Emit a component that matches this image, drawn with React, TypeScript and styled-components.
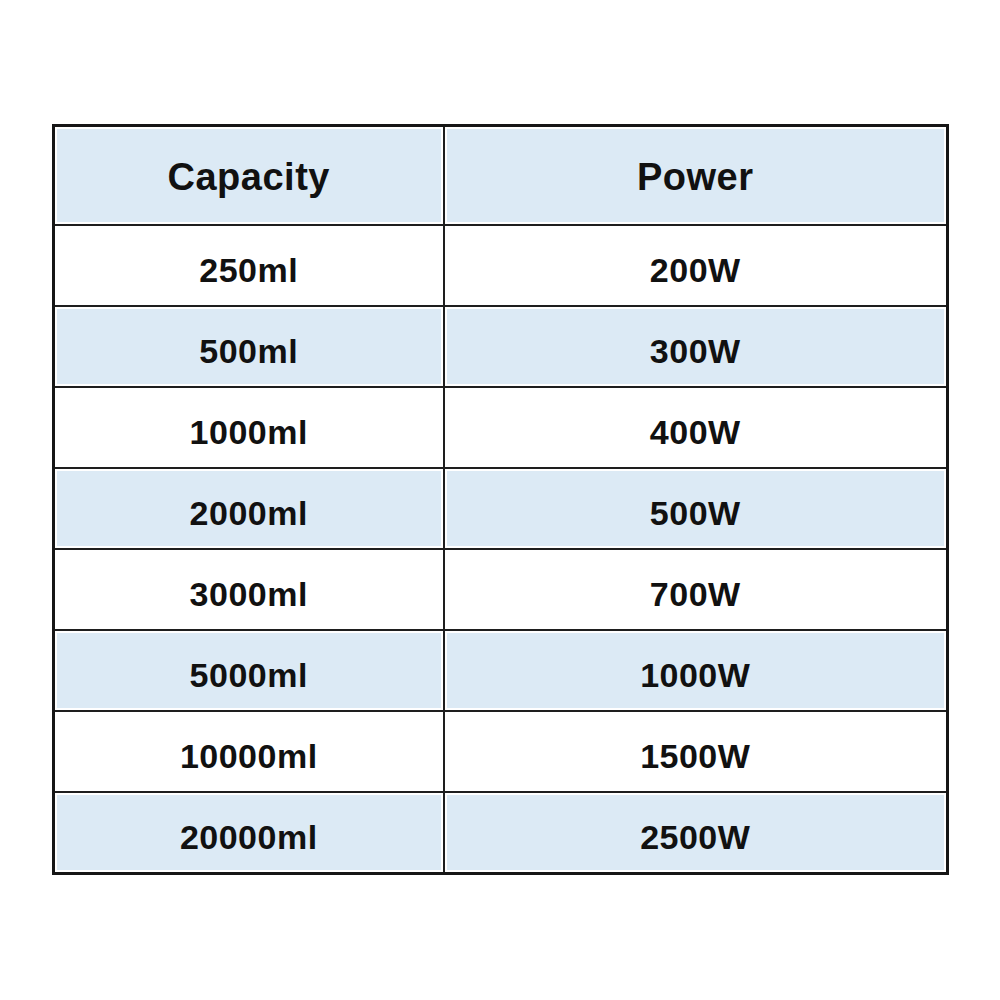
import React from "react";
import styled, { createGlobalStyle } from "styled-components";

const GlobalStyle = createGlobalStyle`
    html, body {
        margin: 0;
        padding: 0;
        background: #ffffff;
    }
    body {
        font-family: "Liberation Sans", Arial, sans-serif;
    }
`;

const rows: [string, string][] = [
    ["250ml", "200W"],
    ["500ml", "300W"],
    ["1000ml", "400W"],
    ["2000ml", "500W"],
    ["3000ml", "700W"],
    ["5000ml", "1000W"],
    ["10000ml", "1500W"],
    ["20000ml", "2500W"],
];

const Page = styled.div`
    width: 1000px;
    height: 1000px;
    padding-top: 124px;
    box-sizing: border-box;
    display: flex;
    justify-content: center;
`;

const Table = styled.table`
    width: 897px;
    margin-left: 1px;
    height: fit-content;
    border-collapse: collapse;
    border: 3px solid #161616;
    table-layout: fixed;
`;

const Cell = styled.td<{ $blue?: boolean; $head?: boolean }>`
    border: 2px solid #1e1e1e;
    height: ${(p) => (p.$head ? "93px" : "69px")};
    padding: 0;
    text-align: center;
    vertical-align: middle;
    background: ${(p) => (p.$blue ? "#dceaf5" : "#ffffff")};
    box-shadow: inset 0 0 0 2px #ffffff;
    color: #111111;
    font-weight: bold;
    font-size: ${(p) => (p.$head ? "38px" : "34px")};
    letter-spacing: ${(p) => (p.$head ? "0.5px" : "0.5px")};
    padding-top: ${(p) => (p.$head ? "4px" : "10px")};
`;

export default function App() {
    return (
        <Page>
            <GlobalStyle />
            <Table>
                <colgroup>
                    <col style={{ width: "390px" }} />
                    <col />
                </colgroup>
                <tbody>
                    <tr>
                        <Cell $head $blue>Capacity</Cell>
                        <Cell $head $blue>Power</Cell>
                    </tr>
                    {rows.map(([cap, power], i) => (
                        <tr key={cap}>
                            <Cell $blue={i % 2 === 1}>{cap}</Cell>
                            <Cell $blue={i % 2 === 1}>{power}</Cell>
                        </tr>
                    ))}
                </tbody>
            </Table>
        </Page>
    );
}
